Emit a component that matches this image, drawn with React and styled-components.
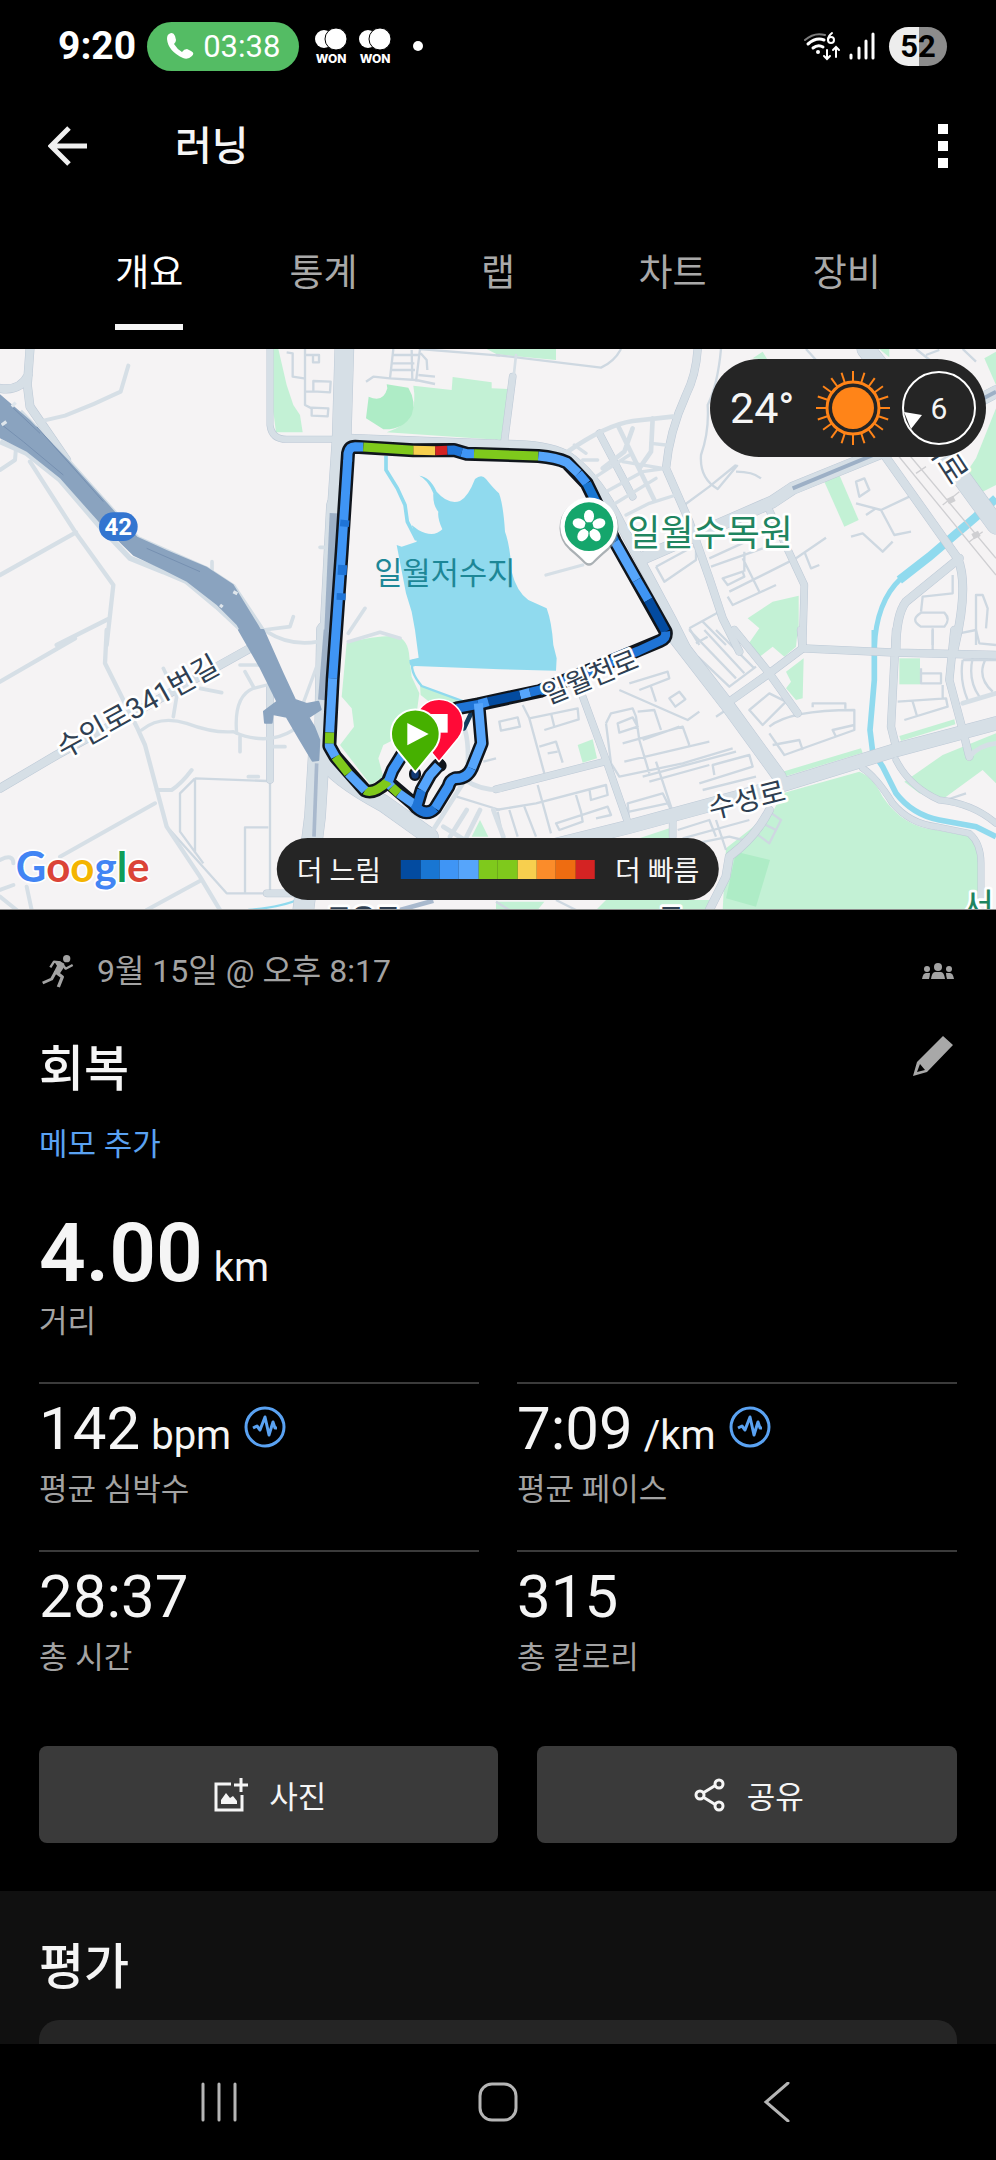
import React, { useState } from "react";
import styled, { createGlobalStyle } from "styled-components";

const tabs = ["개요", "통계", "랩", "차트", "장비"];

const stats = [
  { value: "142", unit: "bpm", label: "평균 심박수", hasInsight: true },
  { value: "7:09", unit: "/km", label: "평균 페이스", hasInsight: true },
  { value: "28:37", label: "총 시간" },
  { value: "315", label: "총 칼로리" }
];

const paceColors = [
  "#034ba0",
  "#1976d2",
  "#3f95f5",
  "#56a5fb",
  "#7fc91c",
  "#7fc91c",
  "#f7cf4e",
  "#fb8c2a",
  "#ee6c11",
  "#d42323"
];

// the map is cut into four tiles, each drawn in its own coordinates
const tileOrigins = {
  nw: "translate(0 -12)",
  ne: "translate(1488 -12)",
  sw: "translate(0 843)",
  se: "translate(1488 843)"
};

const parks = {
  nw: [
    "M820 12 L835 12 860 120 880 180 900 210 908 262 828 262 820 200Z",
    "M1240 122 L1355 135 1358 96 1475 112 1475 130 1525 132 1503 285 1160 262 Q1260 230 1240 122Z",
    "M1460 12 H1668 V45 L1490 28Z"
  ],
  ne: [
    "M985 410 L1030 390 1088 525 1045 545Z",
    "M1500 190 L1440 340 1400 400 1460 440 1500 420Z",
    "M755 820 L830 770 908 752 908 870 880 900 755 900 790 850Z",
    "M770 40 L800 20 815 45Z",
    "M1465 40 L1500 20 V120Z",
    "M1150 12 h30 v25Z"
  ],
  sw: [
    "M1040 38 Q1130 15 1190 18 Q1225 30 1228 80 L1235 140 1258 190 1250 250 1180 330 1150 345 1135 385 1150 440 1112 465 1020 345 1062 290 1055 235 1025 200Z",
    "M1260 165 L1385 215 1300 225 1262 195Z",
    "M1415 620 L1440 570 1465 620Z"
  ],
  se: [
    "M755 50 L790 0 905 0 900 50 865 80 830 50 785 85Z",
    "M870 125 L923 85 920 205 900 210 870 175 885 155Z",
    "M1210 85 h62 v78 h-62Z",
    "M245 345 L290 328 303 385 260 398Z",
    "M860 425 L1095 355 1100 368 865 440Z",
    "M1210 318 L1375 268 1378 283 1215 333Z",
    "M1225 455 L1340 375 1500 310 1500 460 1460 420 1340 508 1270 490Z",
    "M690 655 L830 545 860 490 1090 425 Q1130 440 1160 500 Q1220 590 1320 600 L1430 620 Q1455 650 1455 700 L1450 840 680 840Z",
    "M430 625 L520 595 520 640Z",
    "M0 815 h145 l-20 25 h-125Z",
    "M300 840 L330 810 H640 V840Z"
  ]
};

const fields = {
  nw: [
    "M1160 118 L1225 128 Q1250 170 1235 210 Q1210 255 1150 253 L1098 220 1106 155 Q1150 175 1162 130Z"
  ],
  se: ["M720 665 L822 690 780 830 690 805Z"]
};

const lake = {
  nw: [
    "M1258 392 Q1290 395 1310 440 Q1345 480 1380 468 Q1405 455 1425 402 Q1445 385 1458 402 Q1480 430 1497 445 Q1510 480 1515 560 Q1530 600 1535 680 Q1550 740 1585 765 L1640 790 Q1655 830 1660 900 L1670 940 1668 977 1500 973 1245 963 Q1228 970 1228 945 L1256 938 1245 855 1235 800 1218 745 1190 600 1205 605 1250 590 1235 540 1255 555 Q1300 580 1327 553 Q1312 520 1315 500 Q1298 480 1300 445 Q1285 405 1258 392Z"
  ]
};

const streams = [
  { tile: "nw", width: 11, d: "M1158 332 L1158 375 1192 430 1215 480 1222 530 1250 585" },
  { tile: "ne", width: 26, d: "M1500 460 L1440 515 1300 635 1210 705" },
  { tile: "ne", width: 15, d: "M1215 700 Q1140 770 1135 910" },
  { tile: "se", width: 17, d: "M1135 0 L1135 150 1122 300 1130 365 1160 410 1200 490 Q1250 555 1330 570 L1440 590 1500 620" },
  { tile: "sw", width: 7, d: "M1240 90 Q1225 120 1265 168 L1400 218" },
  { tile: "sw", width: 7, d: "M745 840 Q850 830 890 810" }
];

const lanes = {
  nw: [
    "M860 22 L878 25 878 95 912 100 M915 12 V180 L935 190 M915 30 h42 v22 h-18 v-20 M940 108 l52 2 -2 32 -50 -3Z M915 140 h25 M935 188 l50 2 -2 24 -48 -2Z",
    "M1180 12 L1170 100 M1235 15 L1237 105 M1260 12 L1248 110 M1180 30 h80 M1178 55 h65 M1175 75 h70 M1098 110 L1120 95 1170 100 1248 105 1305 117 M1255 90 L1305 95 M1262 25 L1280 45 1282 75 M1260 12 L1500 32"
  ],
  ne: [
    "M0 30 L315 68 Q355 50 375 12 M675 12 Q665 120 635 180 Q640 260 615 330 Q610 400 665 432 L725 360 M720 380 Q770 380 795 400 M720 360 L640 425 565 480",
    "M480 665 L505 710 600 645 600 600 480 665 M640 640 L750 590 M645 665 L800 610 M680 700 L740 680 745 695 695 720Z M740 640 L790 740 M700 740 L880 650 M695 755 L710 780 840 720 M745 620 V680",
    "M580 850 L670 800 M620 830 L690 900 M580 850 L610 900 M900 640 L990 578 M925 620 L945 670 970 660",
    "M1080 410 L1105 400 1120 435 1090 455Z M1240 455 L1155 495 1080 475 M1155 495 L1195 570 1245 560 M1065 575 L1100 565 1160 620 1190 590 M1110 510 L1140 490",
    "M1370 690 V745 L1280 755 1275 800 M1275 803 h70 q20 20 0 42 h-70 q-35 -20 0 -42Z M1310 850 V900 M1440 900 V750 h20 l15 40 -5 60",
    "M930 12 L960 45 M1260 12 L1320 60 M1400 12 L1440 50 M1290 30 L1330 15"
  ],
  sw: [
    "M585 445 L800 453 M585 445 V670 M585 445 L540 490 V605 L610 700 M735 790 V592 H805 M810 460 V790 H680 L510 600",
    "M1370 500 L1500 540 M1450 395 L1488 385"
  ],
  se: [
    "M10 275 L65 262 72 290 15 302Z M80 225 L100 265 245 235 248 268 145 300 M100 265 L145 430 M165 250 L175 290 M130 350 L180 335 200 398 M155 370 L185 365",
    "M330 280 L345 250 410 235 420 260 430 330 460 430 M365 280 L410 262 425 290 370 308Z M330 280 L345 400 370 440 560 400 710 355 M380 340 L560 290 580 345 M440 330 L550 290 M385 395 L640 335 M425 245 L475 240 495 300 M440 440 L720 365 M460 455 L640 405",
    "M370 180 L575 270 610 245 M400 160 L515 125 520 145 430 180 M465 170 L480 215 M520 205 L550 185 568 208 538 230Z",
    "M395 520 L500 490 530 550 400 580Z M400 545 L515 520 M480 395 L530 545 M610 460 L770 410 760 375 650 405 655 435 M620 480 L780 440",
    "M0 540 L120 520 330 465 335 495 285 510 280 475 M40 540 L65 620 M85 530 L120 620 M125 465 L165 610 M240 495 L255 545 260 575 190 600 180 580 335 530 345 555 300 565 M5 545 L20 620",
    "M545 600 L640 570 660 620 M560 625 L760 570 M600 640 L700 620 740 630 M660 570 L690 660 M820 545 L855 570 820 640 780 610Z M800 580 L840 600",
    "M605 80 L700 170 780 110 M580 0 L720 145 M625 0 L745 130 M660 0 L775 115 M635 20 L600 40",
    "M760 240 L820 190 870 215 800 285Z M660 260 L690 240 M820 290 Q880 240 1075 240 V300 L865 375 820 310 M830 345 L910 330 920 360 M1075 285 L1010 300 1020 320 M950 232 V220 h98 v16",
    "M1275 115 V160 h60 v-30 h-60 M1340 165 V205 M1205 215 L1350 205 1355 230 1225 270 M1250 215 L1262 255 M1310 0 V60 M1390 10 L1440 0 1450 40 1500 45",
    "M1400 90 Q1390 150 1415 210 M1430 85 Q1415 150 1450 200 M1470 85 Q1440 140 1490 185 M1400 90 H1500 M1350 510 L1410 490",
    "M180 810 L240 840 M0 815 L40 840"
  ]
};

const roads = [
  { tile: "nw", width: 12, d: "M385 62 L362 140 Q280 180 195 212 L118 230 M0 375 L45 345 48 310" },
  { tile: "nw", width: 13, d: "M90 350 L225 560 340 720 320 900 M0 690 L228 562 M170 900 L325 822" },
  { tile: "nw", width: 11, d: "M790 855 L870 845 880 815 M800 860 Q870 905 955 890 M636 650 V690 M960 607 H990 M1095 790 L1045 865 M1045 890 L1140 862 1200 880" },
  { tile: "nw", width: 24, d: "M90 12 L82 120 90 185 200 345 M0 130 Q60 140 85 90" },
  { tile: "nw", width: 18, d: "M810 12 V240 Q815 283 860 283 L1000 283" },
  { tile: "nw", width: 26, d: "M1025 280 L1490 298" },
  { tile: "nw", width: 56, d: "M1033 12 L1025 280 1010 500" },
  { tile: "nw", width: 50, d: "M1005 480 L985 860" },
  { tile: "ne", width: 14, d: "M215 320 Q330 240 410 228 L530 215 M365 240 L475 465 M410 250 L385 320 320 370 M470 220 L465 320 430 370" },
  { tile: "ne", width: 10, d: "M465 295 L510 300 M235 300 L270 325 M260 345 L305 345 M300 395 L400 330 M330 440 L440 380 510 370 M390 510 L460 475 540 450 M380 350 L500 370 M350 480 L480 400 M150 690 L260 660" },
  { tile: "ne", width: 20, d: "M310 265 L410 455 M25 290 L50 95" },
  { tile: "ne", width: 8, d: "M53 95 L60 30" },
  { tile: "ne", width: 22, d: "M605 12 Q600 90 570 150 Q520 260 510 370 L580 530 640 700 680 820 730 920" },
  { tile: "ne", width: 20, d: "M815 485 L925 720 920 900" },
  { tile: "ne", width: 36, d: "M440 640 L830 470 890 430 1160 320 1500 140" },
  { tile: "ne", width: 28, d: "M0 300 Q140 295 210 330 Q300 390 370 530 L525 820 570 910" },
  { tile: "ne", width: 24, d: "M1165 330 L1385 640 Q1420 720 1375 910 M1390 640 L1230 770 Q1200 810 1200 910" },
  { tile: "ne", width: 54, d: "M1110 12 L1180 100 1500 540" },
  { tile: "sw", width: 13, d: "M320 0 L315 100 410 290 435 345 500 590 600 740 660 840 M0 155 L225 25" },
  { tile: "sw", width: 10, d: "M425 300 Q480 255 560 280 Q640 310 700 305 Q800 350 880 300 L950 110 M710 310 Q700 200 760 175 L800 165" },
  { tile: "sw", width: 12, d: "M470 480 H515 Q545 460 575 420 M180 680 L465 520 M440 840 L605 750 M0 690 Q40 670 40 700 M0 800 L50 840 M80 770 L95 840 M0 780 L40 765" },
  { tile: "sw", width: 11, d: "M490 115 L530 200 520 260 M600 175 L665 188 M735 125 L760 170 M720 105 H780 M720 365 V320 M855 350 H810 M745 440 H775" },
  { tile: "sw", width: 20, d: "M810 170 V450 M800 790 H900" },
  { tile: "sw", width: 24, d: "M0 475 L170 375 400 250 750 55" },
  { tile: "sw", width: 14, d: "M1290 615 L1395 450 Q1440 480 1500 480 M1400 450 Q1410 350 1395 300 M1400 540 L1350 620 M1440 540 L1400 620 M1480 540 L1510 620 M1330 590 L1410 640" },
  { tile: "sw", width: 50, d: "M975 0 L968 380 Q1000 440 1150 520 L1290 620" },
  { tile: "sw", width: 62, d: "M958 350 L945 560 910 840" },
  { tile: "se", width: 20, d: "M0 478 L325 395 M260 200 L330 390 400 590 M530 560 V620" },
  { tile: "se", width: 22, d: "M700 215 L820 130 920 55 915 0 M715 0 L820 130 905 250 M1375 0 L1360 150 1400 300 1420 380" },
  { tile: "se", width: 14, d: "M1400 220 L1500 190 M1420 380 Q1450 345 1500 340" },
  { tile: "se", width: 22, d: "M920 55 L1200 68 1500 75 M1200 0 L1185 290 1200 350" },
  { tile: "se", width: 18, d: "M1100 415 Q1140 440 1190 520 Q1240 580 1320 590 L1420 610 Q1455 640 1455 700 V800 M1200 390 Q1240 470 1330 510 Q1430 520 1500 580" },
  { tile: "se", width: 24, d: "M820 540 Q780 620 700 680 L690 740 640 840" },
  { tile: "se", width: 40, d: "M520 0 L690 220 850 440 M120 660 L400 590 860 465 1200 360 1500 280" }
];

// [color, path] pairs in order along the run
const routeSegments = [
  ["#3f95f5", "M1043 350 L1044 325 Q1048 305 1065 305 L1090 306"],
  ["#7fc91c", "M1090 306 L1240 316"],
  ["#f7cf4e", "M1240 316 L1306 317"],
  ["#d42323", "M1306 317 L1342 316"],
  ["#1f74d6", "M1342 316 L1362 315 1385 322"],
  ["#3f95f5", "M1385 322 L1400 326 1422 326"],
  ["#7fc91c", "M1422 326 L1615 333"],
  ["#56a5fb", "M1615 333 Q1670 338 1700 352 L1735 385"],
  ["#3f95f5", "M1735 385 L1760 415"],
  ["#1976d2", "M1760 415 L1800 495 1845 590"],
  ["#56a5fb", "M1845 590 L1910 705"],
  ["#3f95f5", "M1910 705 L1945 765"],
  ["#034ba0", "M1945 765 L1997 860"],
  ["#1f74d6", "M1997 860 Q2000 880 1980 888 L1915 918 1620 1038"],
  ["#1f74d6", "M1640 1030 L1590 1042"],
  ["#56a5fb", "M1590 1042 L1560 1050"],
  ["#034ba0", "M1560 1050 L1465 1070"],
  ["#3f95f5", "M1465 1070 L1435 1078"],
  ["#1f74d6", "M1435 1078 L1370 1090"],
  ["#56a5fb", "M1435 1075 L1445 1195 1415 1270"],
  ["#3f95f5", "M1415 1270 Q1400 1302 1365 1300 Q1350 1305 1345 1325 L1305 1390"],
  ["#1f74d6", "M1305 1390 Q1280 1415 1250 1388 L1240 1376"],
  ["#56a5fb", "M1240 1376 L1196 1345"],
  ["#7fc91c", "M1196 1345 L1175 1326"],
  ["#56a5fb", "M1175 1326 L1162 1312"],
  ["#7fc91c", "M1165 1308 Q1120 1350 1095 1336"],
  ["#56a5fb", "M1095 1336 L1045 1285"],
  ["#7fc91c", "M1045 1285 L1006 1235"],
  ["#56a5fb", "M1006 1235 L988 1203 988 1195"],
  ["#7fc91c", "M988 1195 L989 1162"],
  ["#56a5fb", "M989 1162 L998 1000"],
  ["#3f95f5", "M998 1000 L1025 620 1043 345"],
  ["#1f74d6", "M1033 545 L1035 525 M1026 690 L1028 660 M1023 765 L1024 745"],
  ["#3f95f5", "M1165 1310 L1178 1275 1200 1240 1215 1215"],
  ["#1f74d6", "M1250 1385 L1265 1335"],
  ["#56a5fb", "M1265 1335 L1290 1290 1315 1262"]
];

const routeOutline =
  "M1435 1078 L1370 1090 M1316 1260 L1290 1290 1265 1335 1250 1385 M1215 1215 L1178 1275 1163 1310 " +
  "M1435 1078 L1445 1195 1415 1270 Q1400 1302 1365 1300 Q1350 1305 1345 1325 L1305 1390 Q1280 1415 1250 1388 L1240 1376 1163 1310 Q1120 1350 1095 1336 L1006 1235 988 1203 998 1000 1025 620 1044 325 Q1048 305 1065 305 L1240 316 1362 315 1400 326 1615 333 Q1670 338 1700 352 L1760 415 1845 590 1997 860 Q2000 880 1980 888 L1620 1038 1435 1078";

const TileShapes = ({ shapes, ...props }) =>
  Object.keys(shapes).map(tile => (
    <g key={tile} transform={tileOrigins[tile]} {...props}>
      {shapes[tile].map(d => (
        <path key={d} d={d} />
      ))}
    </g>
  ));

const RouteMap = () => (
  <MapDrawing
    viewBox="0 0 2988 1680"
    preserveAspectRatio="xMidYMid slice"
    role="img"
    aria-label="러닝 경로"
  >
    <rect width="2988" height="1680" fill="#f5f3f4" />
    <TileShapes shapes={parks} fill="#c3f1d5" />
    <TileShapes shapes={fields} fill="#aeecc6" />
    <TileShapes shapes={lake} fill="#90daee" />
    <g fill="none" stroke="#90daee">
      {streams.map(({ tile, width, d }) => (
        <path key={d} d={d} transform={tileOrigins[tile]} strokeWidth={width} />
      ))}
    </g>
    <TileShapes
      shapes={lanes}
      fill="none"
      stroke="#ced8e1"
      strokeWidth="7"
      strokeLinejoin="round"
    />
    <g fill="none" strokeLinejoin="round" strokeLinecap="round">
      {roads
        .filter(({ width }) => width > 16)
        .map(({ tile, width, d }) => (
          <path
            key={d}
            d={d}
            transform={tileOrigins[tile]}
            stroke="#bdc9d6"
            strokeWidth={width + 3}
          />
        ))}
      {roads.map(({ tile, width, d }) => (
        <path
          key={d}
          d={d}
          transform={tileOrigins[tile]}
          stroke="#d6dfe6"
          strokeWidth={width}
        />
      ))}
    </g>

    {/* railway */}
    <g transform={tileOrigins.ne} fill="none" stroke="#cfcfd2" strokeWidth="4">
      <path d="M1205 330 L1500 690 M1240 330 L1500 640 M1260 385 L1290 365 M1340 480 L1390 440 M1420 590 L1460 560" />
      <path d="M1355 470 L1375 460 M1430 575 L1450 565" strokeWidth="18" />
    </g>

    {/* expressway */}
    <g transform={tileOrigins.nw}>
      <path
        d="M60 200 L205 350 412 580 620 672 700 725 790 860 M0 290 L80 325 180 405 300 545 390 640 490 680 560 710 650 785 720 850"
        fill="none"
        stroke="#d3dde5"
        strokeWidth="16"
      />
      <path
        d="M0 148 L90 225 205 345 300 450 412 575 500 615 620 665 700 718 775 840 810 902 745 902 710 840 650 780 560 710 490 675 400 632 300 535 180 400 80 320 0 280Z"
        fill="#8aa3bf"
      />
      <path
        d="M0 235 L70 290 190 390 M440 610 L600 680 M30 180 L120 265 M110 245 L310 470"
        fill="none"
        stroke="#7690b1"
        strokeWidth="3"
      />
      <path d="M35 185 l12 -12 M5 240 l14 -10 M700 740 l12 6 M660 780 l8 6" stroke="#dfe6ec" strokeWidth="10" />
      <path d="M1003 505 L985 900" stroke="#9db0c6" strokeWidth="28" fill="none" />
    </g>
    <g transform={tileOrigins.ne} fill="none" stroke="#9db0c6" strokeWidth="12">
      <path d="M890 430 L1160 318 1500 140" />
    </g>
    <g transform={tileOrigins.sw}>
      <path
        d="M717 0 L790 0 848 130 885 210 920 222 955 215 962 238 925 262 942 290 958 330 955 390 938 392 895 320 860 260 818 252 815 278 795 278 792 245 832 215 780 110Z"
        fill="#8aa3bf"
        stroke="#8aa3bf"
        strokeWidth="6"
        strokeLinejoin="round"
      />
      <path d="M985 0 L968 210" stroke="#9db0c6" strokeWidth="28" />
      <path d="M950 400 L942 620" stroke="#a9b9cd" strokeWidth="11" />
      <path d="M1200 840 L1300 812" stroke="#a9b9cd" strokeWidth="14" />
    </g>

    <MapLabel x="1123" y="705" fontSize="92" fill="#1d8797" $plain>
      일월저수지
    </MapLabel>
    <RoadShield>
      <rect x="297" y="490" width="116" height="86" rx="43" fill="#3375d0" />
      <text x="355" y="559" textAnchor="middle">
        42
      </text>
    </RoadShield>

    <g transform={tileOrigins.nw} fill="none" strokeLinejoin="round">
      <path d="M1392 1150 L1412 1108" stroke="#123a5c" strokeWidth="14" strokeLinecap="round" />
      <path d="M1245 1285 V1290 M1318 1258 L1322 1262" stroke="#10151c" strokeWidth="36" strokeLinecap="round" />
      <path d={routeOutline} stroke="#10151c" strokeWidth="42" strokeLinecap="round" />
      {routeSegments.map(([color, d]) => (
        <path key={d} d={d} stroke={color} strokeWidth="27" />
      ))}
      <path d="M1245 1285 V1290" stroke="#123a75" strokeWidth="22" strokeLinecap="round" />
    </g>

    <MapLabel transform="translate(191 1230) rotate(-29)" fontSize="86">
      수인로341번길
    </MapLabel>
    <MapLabel transform="translate(1642 1068) rotate(-22)" fontSize="82">
      일월천로
    </MapLabel>
    <MapLabel transform="translate(2134 1410) rotate(-14)" fontSize="85">
      수성로
    </MapLabel>
    <MapLabel transform="translate(2762 270) rotate(57)" fontSize="92">
      세로
    </MapLabel>
    <MapLabel x="980" y="1737" fontSize="80" fontWeight="700">
      구운동
    </MapLabel>
    <MapLabel x="1974" y="1740" fontSize="86">
      구
    </MapLabel>
    <MapLabel x="2884" y="1712" fontSize="108" fill="#1f8560">
      서
    </MapLabel>
    <MapLabel x="1882" y="592" fontSize="108" fill="#1f8560">
      일월수목원
    </MapLabel>

    {/* arboretum pin */}
    <g transform="translate(1767 533)">
      <path
        d="M-10 106 Q-25 90 -58 62 A86 86 0 1 1 58 62 Q25 90 10 106 Q0 114 -10 106Z"
        fill="#8b9499"
        stroke="#8b9499"
        strokeWidth="5"
        opacity="0.7"
        transform="translate(0 5)"
      />
      <path d="M-10 106 Q-25 90 -58 62 A86 86 0 1 1 58 62 Q25 90 10 106 Q0 114 -10 106Z" fill="#fff" />
      <circle r="73" fill="#15a66c" />
      {[0, 72, 144, 216, 288].map(angle => (
        <ellipse
          key={angle}
          cy="-31"
          rx="15"
          ry="20"
          fill="#fff"
          transform={`rotate(${angle})`}
        />
      ))}
      <circle r="13" fill="#15a66c" />
    </g>

    {/* finish, then start on top of it */}
    <g transform="translate(1317 1126)" strokeLinejoin="round">
      <path
        d="M0 112 L-58 42 A73 73 0 1 1 58 42Z"
        fill="#ff0a37"
        stroke="#fff"
        strokeWidth="5"
      />
      <path d="M-26 -31 H26 V25 H-26Z" fill="#fff" />
    </g>
    <g transform="translate(1246 1155)" strokeLinejoin="round">
      <path
        d="M0 115 L-58 44 A73 73 0 1 1 58 44Z"
        fill="#46b000"
        stroke="#fff"
        strokeWidth="6"
      />
      <path d="M-24 -33 L40 0 -24 34Z" fill="#fff" />
    </g>

    <GoogleMark x="47" y="1598">
      <tspan fill="#4285f4">G</tspan>
      <tspan fill="#db4437">o</tspan>
      <tspan fill="#f4b400">o</tspan>
      <tspan fill="#4285f4">g</tspan>
      <tspan fill="#0f9d58">l</tspan>
      <tspan fill="#db4437">e</tspan>
    </GoogleMark>
  </MapDrawing>
);

const WonIcon = () => (
  <svg width="34" height="46" viewBox="-1 -5 34 46" aria-hidden="true">
    <circle cx="9" cy="11" r="9" fill="#fff" />
    <circle cx="21" cy="11" r="11" fill="#fff" stroke="#000" strokeWidth="1" />
    <WonText x="16" y="35" textAnchor="middle">
      WON
    </WonText>
  </svg>
);

const WifiIcon = () => (
  <svg width="38" height="30" viewBox="0 0 38 30" fill="none" aria-hidden="true">
    <g stroke="#fff" strokeWidth="2" strokeLinecap="round">
      <path d="M2 9 Q11 1 22 4" stroke="#7c7c7c" />
      <path d="M5 13 Q13 6 21 9" strokeWidth="3" />
      <path d="M10 17 Q15 13 20 16" strokeWidth="3" />
      <path d="M24 19 V27 M21 25 L24 28 27 25 M33 26 V17 M30 19 L33 16 36 19" />
      <path d="M29 2 Q25 5 25 9" />
      <circle cx="28" cy="9" r="3" />
    </g>
    <circle cx="15" cy="21" r="2" fill="#fff" />
  </svg>
);

const SignalIcon = () => (
  <svg width="26" height="28" viewBox="0 0 26 28" aria-hidden="true">
    <path
      d="M2 23 V26 M10 16 V26 M17 9 V26 M24 2 V26"
      stroke="#fff"
      strokeWidth="3"
      strokeLinecap="round"
    />
  </svg>
);

const SunIcon = () => (
  <svg width="76" height="76" viewBox="-38 -38 76 76" aria-label="맑음">
    <circle r="21" fill="#ff8418" />
    <circle r="26" fill="none" stroke="#ff8418" strokeWidth="3" />
    {Array.from({ length: 20 }, (_, i) => (
      <path
        key={i}
        d="M0 -26 V-37"
        stroke="#ff8418"
        strokeWidth="2"
        transform={`rotate(${i * 18})`}
      />
    ))}
  </svg>
);

const InsightIcon = () => (
  <svg width="42" height="42" viewBox="0 0 42 42" fill="none" aria-hidden="true">
    <circle cx="21" cy="21" r="19" stroke="#5aa2f2" strokeWidth="3" />
    <path
      d="M9 22 L13 20 16 24 21 11 25 29 29 16 31 22 33 22"
      stroke="#5aa2f2"
      strokeWidth="3"
      strokeLinejoin="round"
    />
  </svg>
);

const RunnerIcon = () => (
  <svg width="32" height="34" viewBox="129 131 96 102" aria-hidden="true">
    <circle cx="203" cy="145" r="11" fill="#a3a3a3" />
    <path d="M168 157 Q180 148 196 160 L194 172 182 190 164 186 174 166Z" fill="#a3a3a3" />
    <g fill="none" stroke="#a3a3a3" strokeLinejoin="round">
      <path d="M154 171 L165 154 185 156" strokeWidth="7" />
      <path d="M190 162 L200 175 221 164" strokeWidth="7" />
      <path d="M170 184 L158 206 131 218" strokeWidth="9" />
      <path d="M172 186 L190 200 178 230" strokeWidth="10" />
    </g>
  </svg>
);

const GroupIcon = () => (
  <svg width="32" height="18" viewBox="0 0 32 18" fill="#a3a3a3" aria-hidden="true">
    <circle cx="16" cy="5" r="4" />
    <circle cx="5" cy="7" r="3" />
    <circle cx="27" cy="7" r="3" />
    <path d="M9 17 Q10 10 13 10 H19 Q22 10 23 17Z" />
    <path d="M0 17 Q1 11 4 11 H8 Q8 13 7 17Z M32 17 Q31 11 28 11 H24 Q24 13 25 17Z" />
  </svg>
);

const PencilIcon = () => (
  <svg width="42" height="42" viewBox="0 0 42 42" aria-hidden="true">
    <path
      d="M31 1 L41 10 15 37 1 41 5 27Z M8 29 L5 37 13 35Z"
      fill="#a8a8a8"
      fillRule="evenodd"
    />
  </svg>
);

const AddPhotoIcon = () => (
  <svg width="34" height="34" viewBox="0 0 34 34" fill="none" aria-hidden="true">
    <path d="M17 6 H2 V32 H28 V17" stroke="#f5f5f5" strokeWidth="3" />
    <path d="M27 0 V14 M20 7 H34" stroke="#f5f5f5" strokeWidth="3" />
    <path d="M7 26 V22 L12 15 16 20 19 18 23 23 V26Z" fill="#f5f5f5" />
  </svg>
);

const ShareIcon = () => (
  <svg width="32" height="34" viewBox="0 0 32 34" fill="none" aria-hidden="true">
    <g stroke="#f5f5f5" strokeWidth="3">
      <path d="M9 15 L22 7 M9 19 L22 27" />
      <circle cx="6" cy="17" r="4" />
      <circle cx="25" cy="6" r="4" />
      <circle cx="25" cy="28" r="4" />
    </g>
  </svg>
);

const App = () => {
  const [activeTab, setActiveTab] = useState(0);

  return (
    <Page>
      <GlobalStyle />
      <StatusBar>
        <Clock>9:20</Clock>
        <CallChip>
          <svg width="28" height="28" viewBox="0 0 28 28" aria-hidden="true">
            <path
              d="M3 2 Q7 -1 9 4 L10 8 Q10 10 8 12 Q11 17 16 20 Q18 17 21 17 L25 19 Q29 21 26 24 Q22 28 17 26 Q2 19 1 7 Q1 3 3 2Z"
              fill="#fff"
            />
          </svg>
          03:38
        </CallChip>
        <Notifications>
          <WonIcon />
          <WonIcon />
        </Notifications>
        <MoreDot />
        <StatusRight>
          <WifiIcon />
          <SignalIcon />
          <Battery>52</Battery>
        </StatusRight>
      </StatusBar>

      <Header>
        <IconButton aria-label="뒤로">
          <svg width="40" height="40" viewBox="0 0 40 40" aria-hidden="true">
            <path d="M39 20 H4 M21 2 L3 20 21 38" fill="none" stroke="#f0f0f0" strokeWidth="5" />
          </svg>
        </IconButton>
        <Title>러닝</Title>
        <IconButton aria-label="메뉴">
          <svg width="10" height="46" viewBox="0 0 10 46" fill="#fff" aria-hidden="true">
            <path d="M0 1 h10 v10 h-10Z M0 18 h10 v10 h-10Z M0 35 h10 v10 h-10Z" />
          </svg>
        </IconButton>
      </Header>

      <Tabs role="tablist">
        {tabs.map((tab, idx) => (
          <Tab
            key={tab}
            role="tab"
            aria-selected={idx === activeTab}
            $active={idx === activeTab}
            onClick={() => setActiveTab(idx)}
          >
            <span>{tab}</span>
          </Tab>
        ))}
      </Tabs>

      <MapSection>
        <RouteMap />
        <Weather>
          <Temperature>24°</Temperature>
          <SunIcon />
          <Wind>
            <svg width="76" height="76" viewBox="-38 -38 76 76" aria-hidden="true">
              <circle r="36" fill="none" stroke="#fff" strokeWidth="2" />
              <path d="M-35 4 L-17 7 -28 21Z" fill="#fff" />
            </svg>
            <span>6</span>
          </Wind>
        </Weather>
        <Legend>
          더 느림
          <LegendBar>
            {paceColors.map((color, idx) => (
              <LegendStep key={idx} $color={color} />
            ))}
          </LegendBar>
          더 빠름
        </Legend>
      </MapSection>

      <Summary>
        <MetaRow>
          <RunnerIcon />
          <MetaText>9월 15일 @ 오후 8:17</MetaText>
          <GroupIcon />
        </MetaRow>
        <NameRow>
          <SectionTitle>회복</SectionTitle>
          <IconButton aria-label="이름 편집">
            <PencilIcon />
          </IconButton>
        </NameRow>
        <MemoButton>메모 추가</MemoButton>

        <Distance>
          <BigValue>4.00</BigValue>
          <Unit>km</Unit>
        </Distance>
        <Label>거리</Label>

        <StatGrid>
          {stats.map(({ value, unit, label, hasInsight }) => (
            <Stat key={label}>
              <StatValue>
                {value}
                {unit && <Unit>{unit}</Unit>}
                {hasInsight && <InsightIcon />}
              </StatValue>
              <Label>{label}</Label>
            </Stat>
          ))}
        </StatGrid>

        <Actions>
          <ActionButton>
            <AddPhotoIcon />
            사진
          </ActionButton>
          <ActionButton>
            <ShareIcon />
            공유
          </ActionButton>
        </Actions>
      </Summary>

      <Evaluation>
        <SectionTitle>평가</SectionTitle>
        <EvaluationCard />
      </Evaluation>

      <NavBar>
        <NavButton aria-label="최근 앱">
          <svg width="40" height="40" viewBox="0 0 40 40" aria-hidden="true">
            <path d="M4 2 V38 M20 2 V38 M36 2 V38" />
          </svg>
        </NavButton>
        <NavButton aria-label="홈">
          <svg width="40" height="40" viewBox="0 0 40 40" aria-hidden="true">
            <rect x="2" y="2" width="36" height="36" rx="12" />
          </svg>
        </NavButton>
        <NavButton aria-label="뒤로 가기">
          <svg width="40" height="40" viewBox="0 0 40 40" aria-hidden="true">
            <path d="M31 1 L9 20 31 39" />
          </svg>
        </NavButton>
      </NavBar>
    </Page>
  );
};

const GlobalStyle = createGlobalStyle`
  * {
    box-sizing: border-box;
  }
  body {
    margin: 0;
    background: #000;
    color: #f5f5f5;
    font-family: Roboto, "Noto Sans CJK KR", sans-serif;
  }
  button {
    padding: 0;
    border: 0;
    background: none;
    color: inherit;
    font: inherit;
    cursor: pointer;
  }
  svg {
    display: block;
    flex-shrink: 0;
  }
`;

const Page = styled.div`
  min-height: 100vh;
  display: flex;
  flex-direction: column;
`;

const StatusBar = styled.div`
  height: 92px;
  padding: 0 49px 0 58px;
  display: flex;
  align-items: center;
`;

const Clock = styled.span`
  font-size: 39px;
  font-weight: 700;
  color: #fff;
`;

const CallChip = styled.span`
  height: 49px;
  margin-left: 11px;
  padding: 0 19px;
  display: flex;
  align-items: center;
  gap: 9px;
  border-radius: 25px;
  background: #54bc64;
  color: #fff;
  font-size: 31px;
`;

const Notifications = styled.div`
  margin-left: 15px;
  display: flex;
  gap: 10px;
`;

const WonText = styled.text`
  font: 800 12px Inter, sans-serif;
  fill: #fff;
`;

const MoreDot = styled.span`
  width: 10px;
  height: 10px;
  margin-left: 21px;
  border-radius: 50%;
  background: #fff;
`;

const StatusRight = styled.div`
  margin-left: auto;
  display: flex;
  align-items: center;
  gap: 8px;
`;

const Battery = styled.span`
  width: 58px;
  height: 39px;
  margin-left: 6px;
  border-radius: 20px;
  background: linear-gradient(90deg, #ededed 52%, #8c8c8c 52%);
  color: #000;
  font-size: 31px;
  font-weight: 700;
  line-height: 39px;
  text-align: center;
`;

const Header = styled.header`
  height: 108px;
  padding: 0 48px;
  display: flex;
  align-items: center;
`;

const IconButton = styled.button`
  display: flex;
`;

const Title = styled.h1`
  flex: 1;
  margin: 0 0 0 87px;
  padding-top: 2px;
  font-size: 40px;
  font-weight: 500;
  line-height: 56px;
`;

const Tabs = styled.div`
  height: 149px;
  padding: 46px 62px 19px;
  display: flex;
`;

const Tab = styled.button`
  flex: 1;
  display: flex;
  justify-content: center;
  color: ${p => (p.$active ? "#fff" : "#a9a9a9")};
  font-size: 37px;
  line-height: 56px;
  & span {
    height: 100%;
    border-bottom: 6px solid ${p => (p.$active ? "#f5f5f5" : "transparent")};
  }
`;

const MapSection = styled.section`
  position: relative;
  border-bottom: 1px solid #8d8d8d;
`;

const MapDrawing = styled.svg`
  width: 100%;
  height: auto;
`;

const MapLabel = styled.text`
  font-family: Roboto, "Noto Sans CJK KR", sans-serif;
  fill: ${p => p.fill || "#2f3f52"};
  stroke: #fff;
  stroke-width: ${p => (p.$plain ? 0 : 16)};
  stroke-linejoin: round;
  paint-order: stroke;
`;

const RoadShield = styled.g`
  font: 700 72px Roboto, sans-serif;
  & text {
    fill: #fff;
  }
`;

const GoogleMark = styled.text`
  font: 700 126px Lato, sans-serif;
  stroke: #fff;
  stroke-width: 10;
  paint-order: stroke;
`;

const Weather = styled.div`
  position: absolute;
  top: 10px;
  right: 10px;
  height: 98px;
  padding: 0 9px 0 20px;
  display: flex;
  align-items: center;
  gap: 10px;
  border-radius: 49px;
  background: #252525;
`;

const Temperature = styled.span`
  width: 75px;
  font-size: 43px;
`;

const Wind = styled.div`
  display: grid;
  place-items: center;
  font-size: 30px;
  & > * {
    grid-area: 1 / 1;
  }
`;

const Legend = styled.div`
  position: absolute;
  bottom: 9px;
  left: 50%;
  height: 62px;
  padding: 0 20px;
  display: flex;
  align-items: center;
  gap: 20px;
  border-radius: 31px;
  background: #252525;
  font-size: 28px;
  white-space: nowrap;
  transform: translateX(-50%);
`;

const LegendBar = styled.div`
  width: 194px;
  height: 19px;
  display: flex;
`;

const LegendStep = styled.span`
  flex: 1;
  background: ${p => p.$color};
`;

const Summary = styled.main`
  padding: 36px 39px 48px;
`;

const MetaRow = styled.div`
  height: 50px;
  padding: 0 3px;
  display: flex;
  align-items: center;
`;

const MetaText = styled.span`
  flex: 1;
  margin-left: 23px;
  padding-bottom: 6px;
  color: #a3a3a3;
  font-size: 32px;
`;

const NameRow = styled.div`
  margin-top: 39px;
  padding-right: 3px;
  display: flex;
  align-items: flex-start;
  justify-content: space-between;
`;

const SectionTitle = styled.h2`
  margin: 0;
  font-size: 49px;
  font-weight: 500;
  line-height: 70px;
`;

const MemoButton = styled.button`
  display: block;
  margin-top: 18px;
  color: #5aa2f2;
  font-size: 31px;
  line-height: 44px;
`;

const Distance = styled.div`
  margin-top: 45px;
  padding-bottom: 6px;
  display: flex;
  align-items: baseline;
  line-height: 82px;
`;

const BigValue = styled.span`
  font-size: 82px;
  font-weight: 600;
`;

const Unit = styled.span`
  margin-left: 11px;
  font-size: 40px;
  line-height: 44px;
`;

const Label = styled.div`
  color: #a3a3a3;
  font-size: 31px;
  line-height: 44px;
`;

const StatGrid = styled.div`
  margin-top: 38px;
  display: grid;
  grid-template-columns: 1fr 1fr;
  column-gap: 38px;
`;

const Stat = styled.div`
  height: 168px;
  padding-top: 9px;
  border-top: 2px solid #3b3b3b;
`;

const StatValue = styled.div`
  height: 75px;
  display: flex;
  align-items: baseline;
  font-size: 60px;
  line-height: 72px;
  & svg {
    align-self: center;
    margin: 0 0 8px 13px;
  }
`;

const Actions = styled.div`
  margin-top: 28px;
  display: grid;
  grid-template-columns: 12fr 11fr;
  gap: 39px;
`;

const ActionButton = styled.button`
  height: 97px;
  padding-left: 4px;
  display: flex;
  align-items: center;
  justify-content: center;
  gap: 21px;
  border-radius: 8px;
  background: #3a3a3a;
  font-size: 31px;
`;

const Evaluation = styled.section`
  flex: 1;
  padding: 42px 39px 0;
  display: flex;
  flex-direction: column;
  background: #101010;
`;

const EvaluationCard = styled.div`
  flex: 1;
  min-height: 22px;
  margin-top: 17px;
  border-radius: 20px 20px 0 0;
  background: #252525;
`;

const NavBar = styled.nav`
  height: 116px;
  padding: 0 80px;
  display: flex;
  align-items: center;
`;

const NavButton = styled.button`
  flex: 1;
  display: flex;
  justify-content: center;
  & svg {
    fill: none;
    stroke: #b5b5b5;
    stroke-width: 3;
    stroke-linecap: round;
  }
`;

export default App;
